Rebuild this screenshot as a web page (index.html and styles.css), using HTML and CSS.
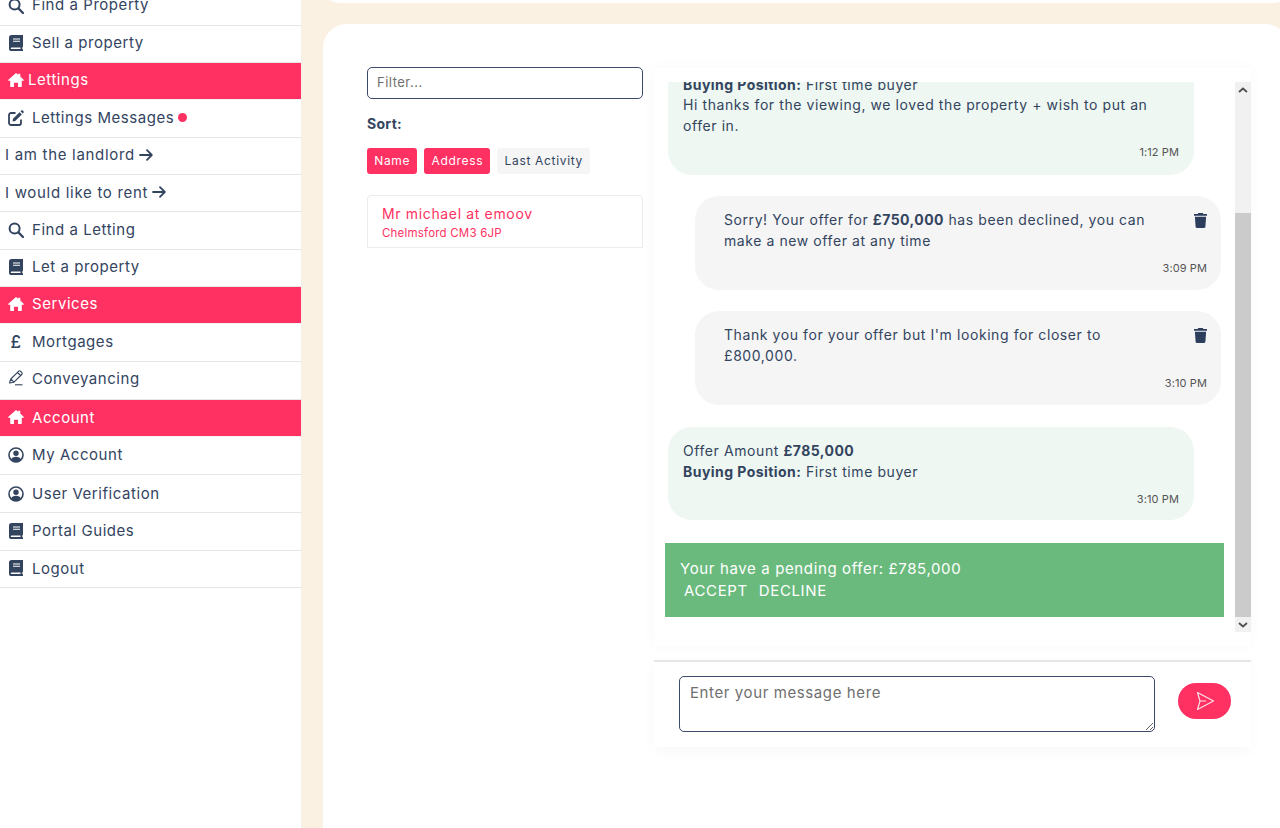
FILE: index.html
```html
<!DOCTYPE html>
<html lang="en">
<head>
<meta charset="utf-8">
<title>Lettings Messages</title>
<link rel="stylesheet" href="styles.css">
</head>
<body>
<svg width="0" height="0" class="defs">
  <symbol id="i-search" viewBox="0 0 16 16"><circle cx="6.6" cy="6.6" r="5" fill="none" stroke="currentColor" stroke-width="2"/><path d="M10.4 10.4 15 15" stroke="currentColor" stroke-width="2.2" stroke-linecap="round"/></symbol>
  <symbol id="i-book" viewBox="0 0 14 16"><path fill="currentColor" d="M2.6 0H14v11.5c0 .5-.3.8-.7.9v1.7h.2c.3 0 .5.3.5.6v1c0 .2-.2.3-.4.3H2.6A2.6 2.6 0 0 1 0 13.4V2.6A2.6 2.6 0 0 1 2.6 0Zm.2 12.4c-1.4 0-1.4 1.7 0 1.7h8.7v-1.7ZM4 3.6v1h7v-1Zm0 2.2v1h7v-1Z" fill-rule="evenodd"/></symbol>
  <symbol id="i-home" viewBox="0 0 18 16"><path fill="currentColor" d="M9 0 .4 7.6c-.5.5-.2 1.2.5 1.2h1.6V15c0 .6.4 1 1 1h3.2v-5h4.6v5h3.200c.6 0 1-.4 1-1V8.800h1.600c.7 0 1-.7.5-1.200L13.800 4V1h-2.300v1Z"/></symbol>
  <symbol id="i-edit" viewBox="0 0 16 16"><path fill="none" stroke="currentColor" stroke-width="1.800" d="M13 9.500V13a2 2 0 0 1-2 2H3a2 2 0 0 1-2-2V5a2 2 0 0 1 2-2h4.500"/><path fill="currentColor" d="M5 8.800 11.600 2.200l2.200 2.200L7.200 11l-2.700.5ZM12.500 1.300l.8-.8c.4-.4 1-.4 1.400 0l.8.8c.4.400.4 1 0 1.400l-.8.800Z"/></symbol>
  <symbol id="i-arrow" viewBox="0 0 14 12"><path fill="none" stroke="currentColor" stroke-width="1.800" stroke-linecap="round" stroke-linejoin="round" d="M1 6h11.500M8 1.200 12.800 6 8 10.800"/></symbol>
  <symbol id="i-pen" viewBox="0 0 16 16"><path fill="none" stroke="currentColor" stroke-width="1.100" stroke-linejoin="round" d="M1.500 13 2.800 9 10.500 1.300c.6-.6 1.500-.6 2.100 0l1.100 1.100c.6.600.6 1.500 0 2.100L6 12.200ZM2.800 9 6 12.200M9.500 2.500l3 3"/><path stroke="currentColor" stroke-width="1.100" d="M7 14.800h7.500"/></symbol>
  <symbol id="i-user" viewBox="0 0 16 16"><circle cx="8" cy="8" r="7" fill="none" stroke="currentColor" stroke-width="1.600"/><circle cx="8" cy="6.300" r="2.700" fill="currentColor"/><path fill="currentColor" d="M3 12.600c.8-2 2.500-2.800 5-2.800s4.200.8 5 2.800C11.800 14 10 15 8 15s-3.800-1-5-2.400Z"/></symbol>
  <symbol id="i-trash" viewBox="0 0 13 15"><path fill="currentColor" d="M4.200 0h4.600l.5 1H13v1.700H0V1h3.700ZM.9 3.700h11.200l-.7 10.100c0 .7-.6 1.200-1.300 1.200H2.900c-.7 0-1.300-.5-1.300-1.200Z"/></symbol>
</svg>
<div class="page">
  <aside class="sidebar">
    <a class="nav-row clip-first"><svg class="ico"><use href="#i-search"/></svg>Find a Property</a>
    <a class="nav-row"><svg class="ico"><use href="#i-book"/></svg>Sell a property</a>
    <a class="nav-head tight"><svg class="ico"><use href="#i-home"/></svg>Lettings</a>
    <a class="nav-row"><svg class="ico"><use href="#i-edit"/></svg>Lettings Messages<span class="dot"></span></a>
    <a class="nav-row plain">I am the landlord<svg class="arrow"><use href="#i-arrow"/></svg></a>
    <a class="nav-row plain">I would like to rent<svg class="arrow"><use href="#i-arrow"/></svg></a>
    <a class="nav-row"><svg class="ico"><use href="#i-search"/></svg>Find a Letting</a>
    <a class="nav-row"><svg class="ico"><use href="#i-book"/></svg>Let a property</a>
    <a class="nav-head"><svg class="ico"><use href="#i-home"/></svg>Services</a>
    <a class="nav-row"><span class="ico pound">£</span>Mortgages</a>
    <a class="nav-row tall lift"><svg class="ico"><use href="#i-pen"/></svg>Conveyancing</a>
    <a class="nav-head"><svg class="ico"><use href="#i-home"/></svg>Account</a>
    <a class="nav-row"><svg class="ico"><use href="#i-user"/></svg>My Account</a>
    <a class="nav-row tall"><svg class="ico"><use href="#i-user"/></svg>User Verification</a>
    <a class="nav-row"><svg class="ico"><use href="#i-book"/></svg>Portal Guides</a>
    <a class="nav-row"><svg class="ico"><use href="#i-book"/></svg>Logout</a>
  </aside>
  <main class="content">
    <div class="top-card"></div>
    <section class="main-card">
      <div class="threads">
        <input class="filter" placeholder="Filter...">
        <div class="sort-label">Sort:</div>
        <div class="sort-btns">
          <button class="sort on">Name</button>
          <button class="sort on">Address</button>
          <button class="sort">Last Activity</button>
        </div>
        <div class="thread">
          <div class="thread-name">Mr michael at emoov</div>
          <div class="thread-addr">Chelmsford CM3 6JP</div>
        </div>
      </div>
      <div class="chat">
        <div class="chat-scroll">
          <div class="messages">
            <div class="msgs-inner">
              <div class="bubble them first">
                <p><b>Buying Position:</b> First time buyer<br>Hi thanks for the viewing, we loved the property + wish to put an offer in.</p>
                <time>1:12 PM</time>
              </div>
              <div class="bubble me">
                <svg class="trash"><use href="#i-trash"/></svg>
                <p>Sorry! Your offer for <b>£750,000</b> has been declined, you can make a new offer at any time</p>
                <time>3:09 PM</time>
              </div>
              <div class="bubble me">
                <svg class="trash"><use href="#i-trash"/></svg>
                <p>Thank you for your offer but I'm looking for closer to £800,000.</p>
                <time>3:10 PM</time>
              </div>
              <div class="bubble them">
                <p>Offer Amount <b>£785,000</b><br><b>Buying Position:</b> First time buyer</p>
                <time>3:10 PM</time>
              </div>
              <div class="pending">
                <div>Your have a pending offer: £785,000</div>
                <div class="actions"><span>ACCEPT</span><span>DECLINE</span></div>
              </div>
            </div>
          </div>
          <div class="scrollbar">
            <span class="sb-btn"><svg viewBox="0 0 10 6"><path d="M1 5 5 1.500 9 5" fill="none" stroke="#505050" stroke-width="1.800"/></svg></span>
            <span class="sb-track"><span class="sb-thumb"></span></span>
            <span class="sb-btn"><svg viewBox="0 0 10 6"><path d="M1 1 5 4.500 9 1" fill="none" stroke="#505050" stroke-width="1.800"/></svg></span>
          </div>
        </div>
        <div class="composer">
          <textarea class="entry" placeholder="Enter your message here"></textarea>
          <button class="send" aria-label="Send"><svg viewBox="0 0 20 20"><path d="M2.500 1.500 18.500 10 2.500 18.500 5 10ZM5 10h6" fill="none" stroke="#fff" stroke-opacity=".85" stroke-width="1.200" stroke-linejoin="round"/></svg></button>
        </div>
      </div>
    </section>
  </main>
</div>
</body>
</html>
```
FILE: styles.css
```css
* { box-sizing: border-box; }
html, body { margin: 0; height: 828px; overflow: hidden; }
body { font-family: Inter, "Liberation Sans", sans-serif; font-size: 14px; color: #33445f; background: #fbf1e3; }
.defs { position: absolute; }
.page { display: flex; height: 828px; overflow: hidden; }

.sidebar { width: 302px; flex: none; background: #fff; height: 828px; border-right: 1px solid #f4efe8; }
.nav-row, .nav-head { display: flex; align-items: center; height: 37.35px; padding: 0 0 1.5px 8px; font-size: 15px; letter-spacing: .55px; border-bottom: 1.5px solid #e6e6e6; }
.nav-row.clip-first { height: 25.5px; align-items: flex-end; padding-bottom: 11px; }
.nav-row.tall { height: 38.5px; padding-bottom: 0; }
.nav-row.lift { padding-bottom: 4px; }
.nav-row.plain { padding-left: 5px; letter-spacing: .7px; }
.nav-head { background: #ff3062; color: #fff; border-bottom: 1px solid #f2f2f2; padding-bottom: 2.5px; }
.ico { width: 16px; height: 16px; flex: none; margin-right: 8px; }
.nav-head.tight .ico { margin-right: 4px; }
.pound { font-size: 17px; font-weight: 500; line-height: 16px; text-align: center; }
.arrow { width: 14px; height: 12px; margin-left: 4px; }
.dot { width: 9px; height: 9px; border-radius: 50%; background: #ff3062; margin-left: 4px; }

.content { flex: 1; min-width: 0; padding-left: 21px; }
.top-card { height: 40px; margin: -37px -9px 21px 0; background: #fff; border-radius: 0 0 16px 16px; }
.main-card { height: 804px; margin-right: -9px; background: #fff; border-radius: 24px 24px 0 0; padding: 43px 0 0 44px; display: flex; }

.threads { width: 276px; flex: none; margin-right: 11px; }
.filter { display: block; width: 100%; height: 32px; padding: 0 9px 2px; border: 1px solid #3a4a68; border-radius: 5px; font: inherit; font-size: 13px; letter-spacing: .5px; color: #33445f; outline: none; }
.filter::placeholder, .entry::placeholder { color: #6f6f6f; opacity: 1; }
.sort-label { font-weight: 700; font-size: 14px; letter-spacing: .3px; margin-top: 17px; line-height: 16px; }
.sort-btns { display: flex; gap: 7px; margin-top: 16px; }
.sort { height: 26px; padding: 0 7.2px 2px; border: 0; border-radius: 3px; background: #f5f5f5; color: #33445f; font: inherit; font-size: 12px; letter-spacing: .67px; }
.sort.on { background: #ff3062; color: #fff; }
.thread { margin-top: 21px; height: 53px; border: 1px solid #ececec; border-radius: 4px 4px 0 0; padding: 9px 14px 0; color: #ff3062; }
.thread-name { font-size: 14px; letter-spacing: .65px; line-height: 18px; }
.thread-addr { font-size: 11.5px; line-height: 14px; margin-top: 3px; letter-spacing: .2px; }

.chat { width: 597px; flex: none; margin-top: 1px; }
.chat-scroll { display: flex; height: 578px; padding: 14px 0; background: #fff; box-shadow: 0 0 14px rgba(0,0,0,.03); }
.messages { width: 581px; flex: none; overflow: hidden; }
.msgs-inner { margin-top: -24px; padding-left: 11px; }
.bubble { position: relative; width: 526px; margin: 0 0 21px 3px; padding: 14.4px 15px 13px; border-radius: 24px; background: #eef7f1; font-size: 14px; line-height: 20.7px; letter-spacing: .58px; }
.bubble p { margin: 0; }
.bubble b { font-weight: 700; letter-spacing: .45px; }
.bubble.first { padding-top: 16.6px; height: 117px; }
.bubble.first p { width: 480px; }
.bubble.first time { margin-top: 8.5px; }
.bubble.me { margin-left: 30px; background: #f5f5f5; padding: 14.4px 28px 13px 29px; height: 94px; }
.bubble.me + .bubble.them { height: 93px; margin-top: 22px; }
.bubble.me p { width: 430px; }
.bubble time { display: block; text-align: right; font-size: 11px; line-height: 14px; margin-top: 9px; color: #555; letter-spacing: .1px; }
.bubble.me time { margin-right: -14px; }
.trash { position: absolute; top: 17px; right: 14px; width: 13px; height: 15px; color: #2c3e5c; }
.pending { width: 559px; height: 74px; margin-top: 23px; padding: 15px 15px 0; background: #6aba7d; color: #fff; font-size: 15px; line-height: 22px; letter-spacing: .63px; }
.actions { display: flex; gap: 11px; padding-left: 4px; }

.scrollbar { width: 16px; flex: none; display: flex; flex-direction: column; background: #f1f1f1; }
.sb-btn { height: 15px; display: flex; align-items: center; justify-content: center; }
.sb-btn svg { width: 10px; height: 6px; }
.sb-track { flex: 1; display: flex; flex-direction: column; justify-content: flex-end; }
.sb-thumb { display: block; height: 404px; background: #cbcbcb; }

.composer { display: flex; align-items: flex-start; height: 87px; margin-top: 14px; padding: 14px 20px 0 25px; border-top: 2px solid #e6e6e6; background: #fff; box-shadow: 0 4px 14px rgba(0,0,0,.03); }
.entry { width: 476px; height: 56px; padding: 6px 10px; border: 1px solid #3a4a68; border-radius: 5px; font: inherit; font-size: 15px; letter-spacing: .6px; color: #33445f; outline: none; }
.send { width: 53px; height: 36px; margin: 7px 0 0 23px; border: 0; border-radius: 18px; background: #ff3062; display: flex; align-items: center; justify-content: center; padding: 0; }
.send svg { width: 20px; height: 20px; }
```
